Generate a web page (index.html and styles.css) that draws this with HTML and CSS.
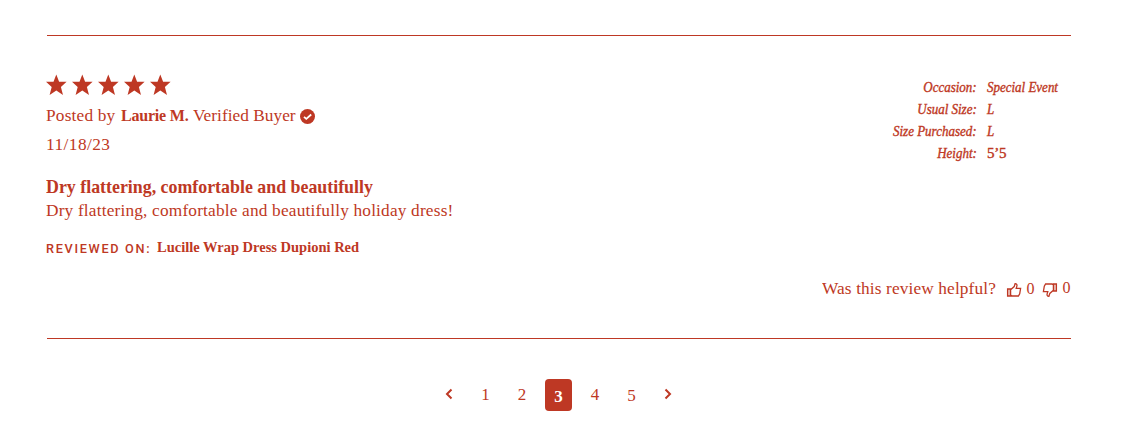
FILE: index.html
```html
<!DOCTYPE html>
<html lang="en">
<head>
<meta charset="utf-8">
<title>Reviews</title>
<link rel="stylesheet" href="styles.css">
</head>
<body>
<svg class="defs" width="0" height="0" aria-hidden="true">
  <symbol id="star" viewBox="0 0 22 22"><path d="M11.3 .5l2.8 7.3h7.5l-5.7 5.1 2.1 8-6.7-4.3-6.7 4.3 2.1-8L1 7.8h7.5z"/></symbol>
  <symbol id="thumb" viewBox="0 0 16 16"><path d="M1.6 7h3v7h-3zM4.6 7.7l3.6-3.1.9-3c1.7 0 2.2 1.3 1.7 2.8l-.6 2h4.4l-.9 5.4-1.3 2.2H6.2l-1.6-.8"/><path d="M3.1 7v7" class="thin"/></symbol>
</svg>
<main class="reviews">
  <article class="review">
    <div class="content">
      <div class="stars"><svg><use href="#star"/></svg><svg><use href="#star"/></svg><svg><use href="#star"/></svg><svg><use href="#star"/></svg><svg><use href="#star"/></svg></div>
      <div class="author"><span class="posted wide">Posted by</span><strong class="name">Laurie M.</strong><span class="verified wide">Verified Buyer</span><svg class="check" viewBox="0 0 15 15"><circle cx="7.5" cy="7.5" r="7.5"/><path d="M4 7.8l2.3 2.1 4.9-4.4"/></svg></div>
      <div class="date wide">11/18/23</div>
      <h3 class="title">Dry flattering, comfortable and beautifully</h3>
      <p class="text wide">Dry flattering, comfortable and beautifully holiday dress!</p>
      <div class="product"><span class="label">REVIEWED ON:</span><strong class="product-name">Lucille Wrap Dress Dupioni Red</strong></div>
    </div>
    <dl class="details">
      <dt><span>Occasion:</span></dt><dd><span>Special Event</span></dd>
      <dt><span>Usual Size:</span></dt><dd><span>L</span></dd>
      <dt><span>Size Purchased:</span></dt><dd><span>L</span></dd>
      <dt><span>Height:</span></dt><dd class="upright">5’5</dd>
    </dl>
    <div class="helpful">
      <span class="question wide">Was this review helpful?</span>
      <svg class="thumb"><use href="#thumb"/></svg>
      <span class="count">0</span>
      <svg class="thumb down"><use href="#thumb"/></svg>
      <span class="count last">0</span>
    </div>
  </article>
  <nav class="pager">
    <span class="arrow"><svg viewBox="0 0 8 12"><path d="M6.5 1.5L2 6l4.5 4.5"/></svg></span>
    <span class="page">1</span><span class="page">2</span><span class="page current">3</span><span class="page">4</span><span class="page low">5</span>
    <span class="arrow"><svg viewBox="0 0 8 12"><path d="M1.5 1.5L6 6l-4.5 4.5"/></svg></span>
  </nav>
</main>
</body>
</html>
```
FILE: styles.css
```css
* { box-sizing: border-box; margin: 0; padding: 0; }
body { background: #fff; color: #be3824; font: 16px/20px "Liberation Serif", serif; overflow: hidden; }
.defs { position: absolute; }
.reviews { padding: 35px 51px 0 46px; }
.review { display: grid; grid-template-columns: 1fr auto; height: 304px; margin-left: 1px; border-top: 1px solid; border-bottom: 1px solid; padding-top: 38px; align-content: start; }
.content { margin-left: -.9px; height: 198px; white-space: nowrap; }
.wide { transform: scaleX(1.08); transform-origin: 0 50%; }
.stars { display: flex; gap: 4px; height: 22px; margin-left: -1.1px; }
.stars svg { width: 22px; height: 22px; fill: currentColor; }
.author { display: flex; margin-top: 10px; height: 20px; }
.posted { width: 74.9px; letter-spacing: .18px; }
.name { width: 72px; letter-spacing: -.2px; }
.verified { width: 107px; letter-spacing: .03px; }
.check { width: 15px; height: 15px; margin-top: 3px; fill: currentColor; }
.check path { fill: none; stroke: #fff; stroke-width: 1.8; }
.date { margin-top: 9px; letter-spacing: .42px; }
.title { margin-top: 21px; font-size: 19px; line-height: 22px; transform: scaleX(.94); transform-origin: 0 50%; }
.text { margin-top: 3px; line-height: 20px; letter-spacing: .17px; }
.product { display: flex; margin-top: 17px; height: 20px; }
.label { width: 110.9px; font: 500 13.5px/20px Roboto, sans-serif; letter-spacing: 1.8px; transform: scaleX(.94); transform-origin: 0 50%; }
.product-name { font-size: 14px; transform: scaleX(1.035); transform-origin: 0 50%; }
.details { display: grid; grid-template-columns: 130px 84px; column-gap: 10px; grid-auto-rows: 22px; padding-top: 2px; font-size: 15px; line-height: 22px; font-style: italic; -webkit-text-stroke: .4px currentColor; white-space: nowrap; }
.details dt { text-align: right; }
.details span { display: inline-block; transform: scaleX(.865); transform-origin: 0 50%; }
.details dt span { transform-origin: 100% 50%; }
.details .upright { font: 15px/22px "Liberation Serif", serif; letter-spacing: -.2px; }
.helpful { grid-column: 1 / -1; display: flex; justify-content: flex-end; height: 20px; margin-top: 7px; white-space: nowrap; }
.question { width: 184px; letter-spacing: .12px; }
.thumb { width: 16px; height: 16px; margin-top: 3px; fill: none; stroke: currentColor; stroke-width: 1.3; }
.thin { stroke-width: .6; }
.down { transform: rotate(180deg); }
.count { width: 20px; padding-left: 4.5px; }
.last { width: 13px; margin-top: -1px; }
.pager { display: flex; justify-content: center; align-items: center; height: 32px; margin-top: 40px; font-size: 17px; }
.page, .arrow { display: flex; align-items: center; justify-content: center; width: 27px; height: 32px; margin: 0 4.75px; }
.arrow svg { width: 8px; height: 12px; margin-bottom: 2px; fill: none; stroke: currentColor; stroke-width: 2; }
.current { background: #be3824; color: #fff; border-radius: 4px; font-weight: 700; padding-top: 4px; }
.low { padding-top: 2px; }
```
